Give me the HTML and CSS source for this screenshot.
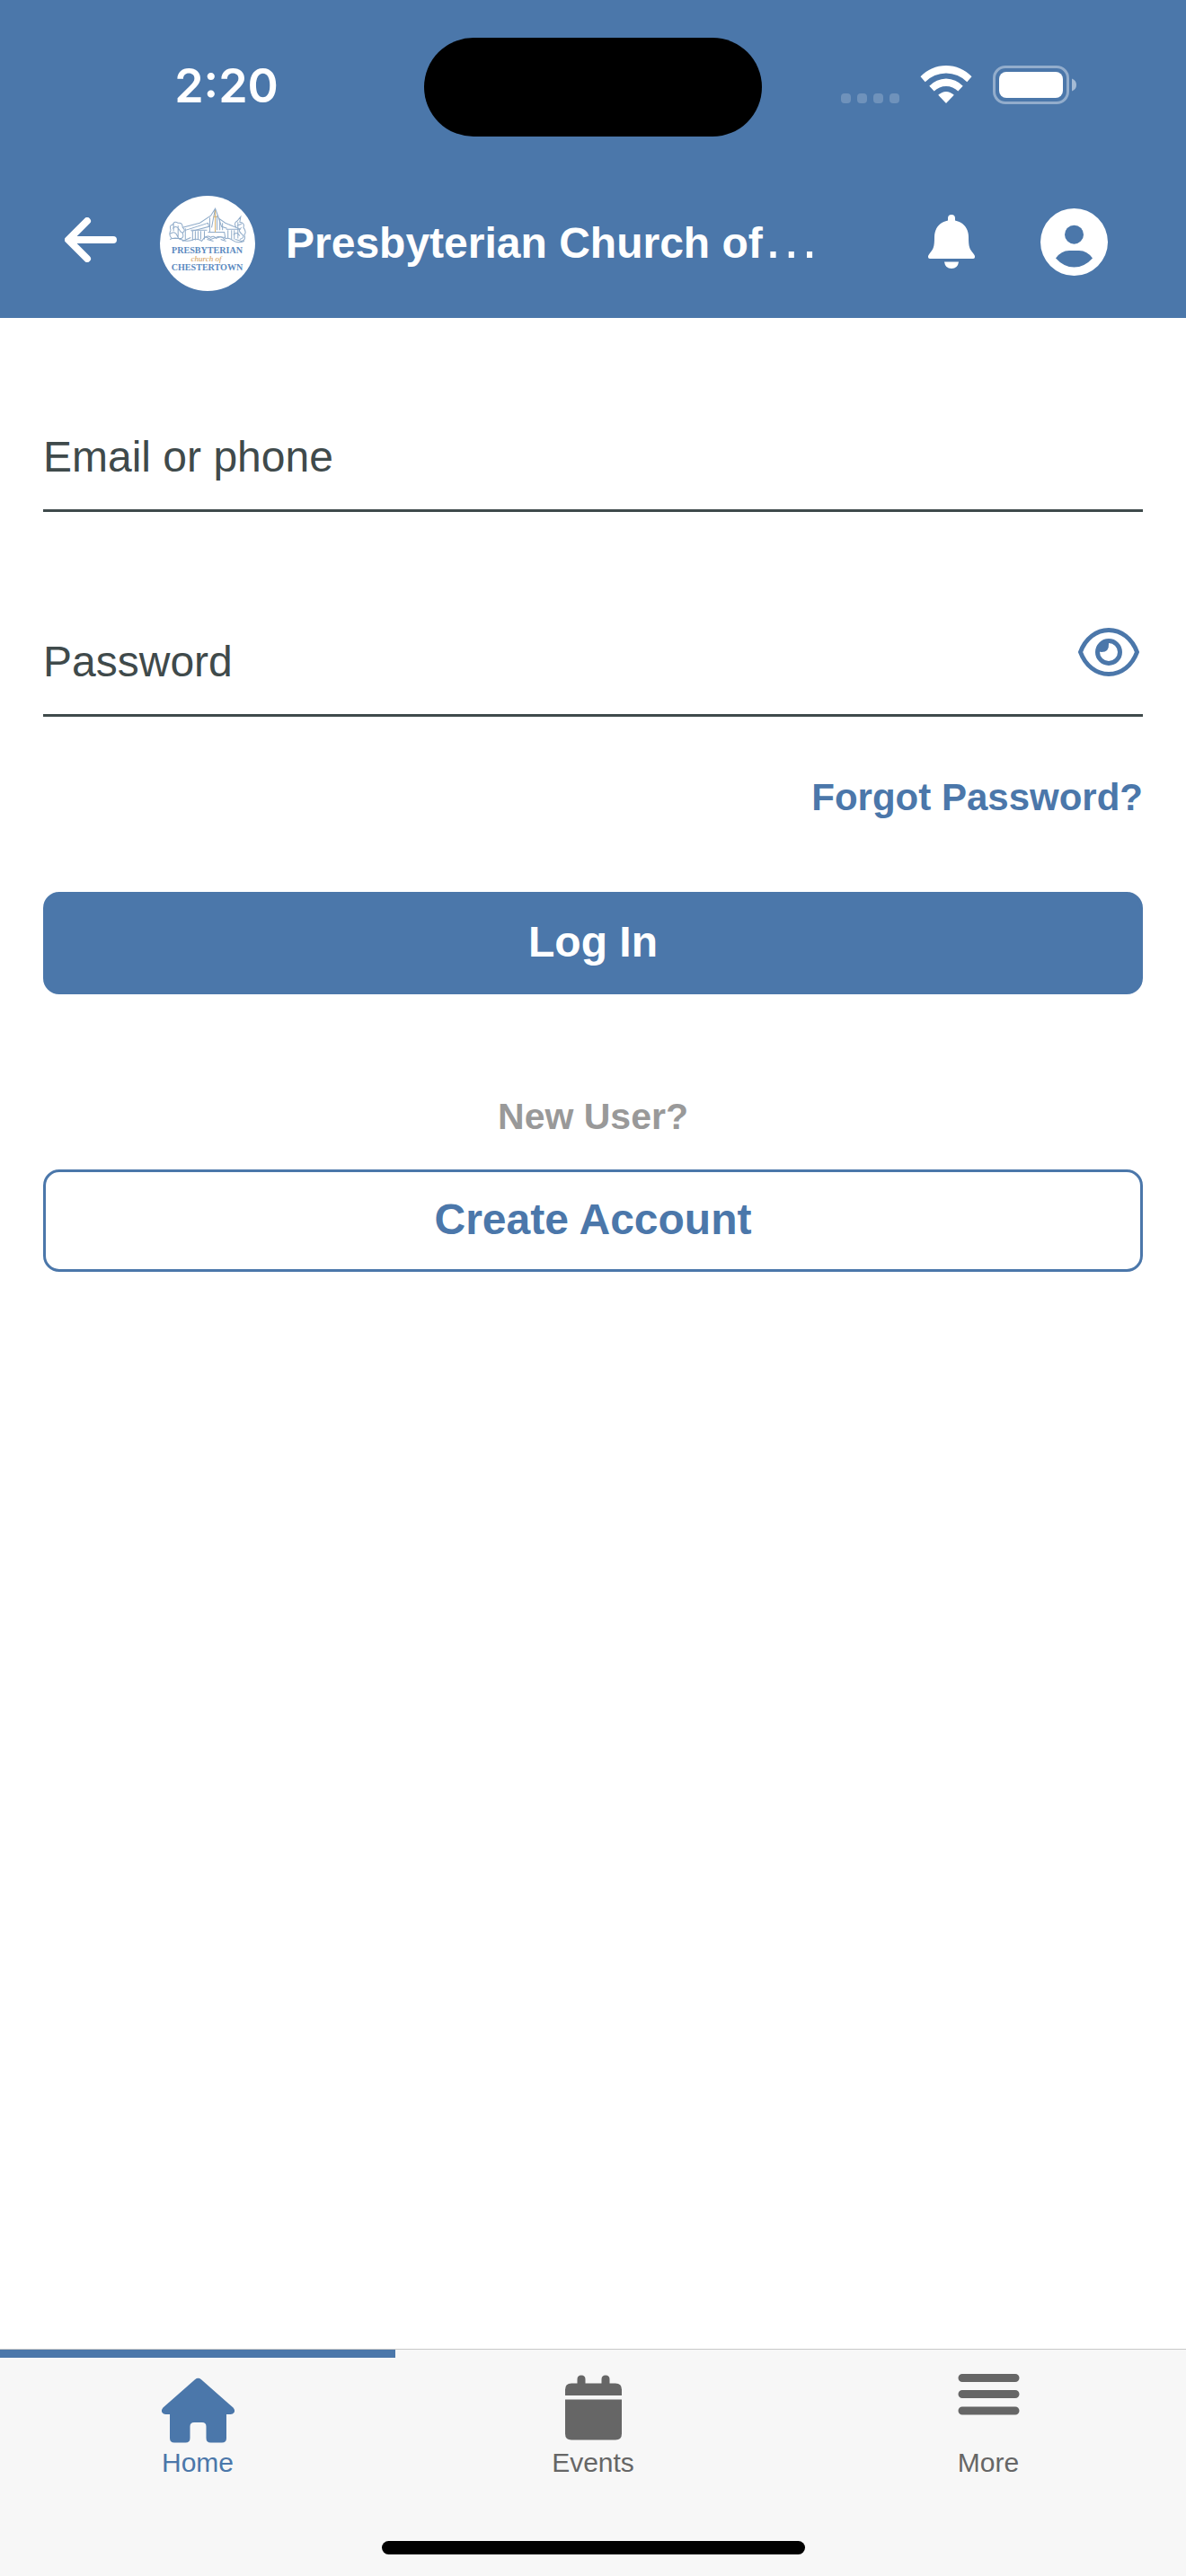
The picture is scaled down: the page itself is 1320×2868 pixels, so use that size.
FILE: index.html
```
<!DOCTYPE html>
<html lang="en">
<head>
    <meta charset="UTF-8">
    <meta name="viewport" content="width=device-width, initial-scale=1">
    <title>Log In</title>
    <link rel="stylesheet" href="styles.css">
</head>
<body>
    <header class="header">
        <div class="status-bar">
            <div class="status-time">2:20</div>
            <div class="island"></div>
            <div class="status-icons">
                <svg class="signal" viewBox="0 0 65 42">
                    <rect x="0" y="31" width="11" height="11" rx="4"/>
                    <rect x="18" y="31" width="11" height="11" rx="4"/>
                    <rect x="36" y="31" width="11" height="11" rx="4"/>
                    <rect x="54" y="31" width="11" height="11" rx="4"/>
                </svg>
                <svg class="wifi" viewBox="0 0 58 42">
                    <path d="M29 0C40 0 50 4.500 57.500 12.200L52.300 18.300A32.500 32.500 0 0 0 5.700 18.300L.5 12.200C8 4.500 18 0 29 0z"/>
                    <path d="M29 14.600A28 28 0 0 1 47.700 22.800L42.300 28.600A18.500 18.500 0 0 0 15.700 28.600L10.300 22.800A28 28 0 0 1 29 14.600z"/>
                    <path d="M29 29Q33.500 29 37.800 32.800L29 42L20.200 32.800Q24.500 29 29 29z"/>
                </svg>
                <svg class="battery" viewBox="0 0 94 44">
                    <rect x="1.500" y="1.500" width="82" height="40" rx="12.500" fill="none" stroke="#fff" stroke-opacity=".4" stroke-width="3"/>
                    <rect x="7" y="7" width="71" height="29" rx="8"/>
                    <path d="M88 14.500Q93 16.500 93 21.500T88 28.500z" fill-opacity=".5"/>
                </svg>
            </div>
        </div>
        <div class="nav-bar">
            <button class="icon-btn back-btn" type="button" aria-label="Back">
                <svg viewBox="0 0 58 50" fill="none" stroke="#fff" stroke-width="8" stroke-linecap="round" stroke-linejoin="round">
                    <path d="M25 4L4 25L25 46M5 25H54"/>
                </svg>
            </button>
            <svg class="logo" viewBox="0 0 105 105" role="img" aria-label="Presbyterian Church of Chestertown">
                <circle cx="52.500" cy="52.500" r="52.500" fill="#fff"/>
                <g fill="none" stroke="#8fabc9" stroke-width="1">
                    <path d="M25 35L44 30L56 22L61 14L65 25L72 30L89 37M28 38L53 30L54 34L35 39M61 14L57 35M61 14L68 34L74 36"/>
                    <path d="M55 24V40M63 22V38M66 26V38M69 30V38M53 40H71L72 46L64 45L56 48L50 45"/>
                    <path d="M28 36V48M34 38H52M36 39V49M39 39V49M42 39V48M45 39V48M49 39V48M75 38V47M79 38V48M82 38V48M73 37H88"/>
                    <path d="M12 38Q10 32 14 32Q16 27 20 30Q25 29 25 35Q29 38 25 41Q27 47 22 47H13Q9 43 12 38M14 36Q18 32 21 37T25 40M11 42Q17 38 19 44T25 46M15 31V39M20 33V47"/>
                    <path d="M84 35Q81 30 85 28L89 23L88 29Q94 30 92 35Q96 40 93 43Q95 49 90 50L83 48M85 33L90 31M86 29V47M90 35Q85 38 90 42T88 48M81 43Q85 39 88 44"/>
                    <path d="M11 48Q17 45 23 48T35 49Q41 46 46 50Q51 42 56 46Q59 43 62 47Q68 43 71 48Q75 45 80 49T93 50M25 50L34 46M52 48L59 50M67 48L73 50"/>
                </g>
                <path d="M61 16V40M59 23H63" stroke="#d4b06c" stroke-width="1" fill="none"/>
                <text class="logo-name" x="52" y="63" text-anchor="middle">PRESBYTERIAN</text>
                <text class="logo-name" x="52" y="82" text-anchor="middle">CHESTERTOWN</text>
                <text class="logo-script" x="51" y="72" text-anchor="middle">church of</text>
            </svg>
            <h1 class="title">Presbyterian Church of<span class="ellipsis">…</span></h1>
            <button class="icon-btn bell-btn" type="button" aria-label="Notifications">
                <svg viewBox="0 0 54 60" fill="#fff">
                    <path d="M27 0Q31 0 31 4V6.500C41 8.500 46 16 46 25C46 36 47 38 51.500 43.500Q54 46.500 52.500 48.500Q51.500 49 49 49H5Q2.500 49 1.500 48.500Q0 46.500 2.500 43.500C7 38 8 36 8 25C8 16 13 8.500 23 6.500V4Q23 0 27 0z"/>
                    <path d="M19 52.500H35Q34 60 27 60T19 52.500z"/>
                </svg>
            </button>
            <button class="icon-btn account-btn" type="button" aria-label="Account">
                <svg viewBox="0 0 75 75">
                    <path fill="#fff" fill-rule="evenodd" d="M37.500 0a37.500 37.500 0 1 0 0 75a37.500 37.500 0 1 0 0-75zM37.500 18.700a10.500 10.500 0 1 1 0 21a10.500 10.500 0 1 1 0-21zM17 55.500Q23 47 32 47H43Q52 47 58 55.500Q49 65.500 37.500 65.500T17 55.500z"/>
                </svg>
            </button>
        </div>
    </header>

    <main class="content">
        <form class="login-form">
            <div class="field">
                <input type="text" id="login" placeholder="Email or phone" aria-label="Email or phone">
            </div>
            <div class="field">
                <input type="password" id="password" placeholder="Password" aria-label="Password">
                <button class="icon-btn eye-btn" type="button" aria-label="Show password">
                    <svg viewBox="0 0 68 54">
                        <path fill="none" stroke="#4b77aa" stroke-width="5" stroke-linejoin="round" d="M34 2.500C20 2.500 8 12 2.500 27C8 42 20 51.500 34 51.500S60 42 65.500 27C60 12 48 2.500 34 2.500z"/>
                        <circle cx="34" cy="27" r="12.500" fill="none" stroke="#4b77aa" stroke-width="5"/>
                        <path fill="#4b77aa" d="M34 14V18Q34.500 27 26 27L21 26Q22 15 34 14z"/>
                    </svg>
                </button>
            </div>
            <a class="forgot" href="#">Forgot Password?</a>
            <button class="btn btn-primary" type="submit">Log In</button>
            <p class="new-user">New User?</p>
            <button class="btn btn-outline" type="button">Create Account</button>
        </form>
    </main>

    <footer class="footer">
        <nav class="tabs">
            <a class="tab active" href="#">
                <svg viewBox="0 0 81 81">
                    <path d="M37 6.200Q40.500 3.300 44 6.200L79.500 37.500Q82 40.300 80.500 43Q79.300 45 76.500 45H72V71.500Q72 76.500 67 76.500H54.500Q49.500 76.500 49.500 71.500V58.500Q49.500 54 45 54H36Q31.500 54 31.500 58.500V71.500Q31.500 76.500 26.500 76.500H14Q9 76.500 9 71.500V45H4.500Q1.700 45 .5 43Q-1 40.300 1.500 37.500z"/>
                </svg>
                <span>Home</span>
            </a>
            <a class="tab" href="#">
                <svg viewBox="0 0 81 81">
                    <path d="M9 24V17.500Q9 10.500 16 10.500H22.500V6Q22.500 1.500 27 1.500T31.500 6V10.500H49.500V6Q49.500 1.500 54 1.500T58.500 6V10.500H65Q72 10.500 72 17.500V24zM9 28.500H72V66.500Q72 73.500 65 73.500H16Q9 73.500 9 66.500z"/>
                </svg>
                <span>Events</span>
            </a>
            <a class="tab" href="#">
                <svg viewBox="0 0 81 81">
                    <path d="M11 4.500H70M11 22.500H70M11 41H70" fill="none" stroke="#666" stroke-width="9" stroke-linecap="round"/>
                </svg>
                <span>More</span>
            </a>
        </nav>
        <div class="home-indicator"></div>
    </footer>
</body>
</html>
```
FILE: styles.css
```
* {
    box-sizing: border-box;
}
body {
    margin: 0;
    min-height: 100vh;
    display: flex;
    flex-direction: column;
    background: white;
    font-family: "Liberation Sans", Arial, sans-serif;
    font-size: 48px;
    color: #3f4a4b;
}
svg {
    display: block;
}

/* Header */
.header {
    background: #4b77aa;
    color: white;
    padding: 42px 87px 30px 72px;
}
.status-bar {
    display: grid;
    grid-template-columns: 1fr 376px 1fr;
    margin: 0 -87px 0 -72px;
}
.status-time {
    font-family: Inter, sans-serif;
    font-size: 52px;
    font-weight: 600;
    line-height: 108px;
    padding-left: 32px;
    text-align: center;
}
.island {
    height: 110px;
    border-radius: 55px;
    background: black;
}
.status-icons {
    display: flex;
    justify-content: flex-end;
    gap: 23px;
    padding: 31px 121px 0 0;
    fill: white;
}
.signal {
    width: 65px;
    height: 42px;
    fill-opacity: 0.2;
}
.wifi {
    width: 58px;
    height: 42px;
}
.battery {
    width: 94px;
    height: 44px;
}
.nav-bar {
    display: flex;
    align-items: center;
    margin-top: 66px;
}
.icon-btn {
    border: none;
    background: none;
    padding: 0;
    cursor: pointer;
}
.back-btn {
    padding-bottom: 8px;
}
.back-btn svg {
    width: 58px;
    height: 50px;
}
.logo {
    width: 106px;
    height: 106px;
    margin: 0 34px 0 48px;
}
.logo-name {
    font-family: "Liberation Serif", serif;
    font-size: 10px;
    font-weight: bold;
    fill: #5c8abf;
}
.logo-script {
    font-family: "Liberation Serif", serif;
    font-size: 9px;
    font-style: italic;
    fill: #d29a51;
}
.title {
    flex: 1;
    margin: 0;
    font-size: 48px;
    line-height: 54px;
    font-weight: bold;
    white-space: nowrap;
}
.ellipsis {
    font-size: 64px;
    line-height: 1px;
    font-weight: normal;
}
.bell-btn {
    margin-right: 72px;
    padding-bottom: 4px;
}
.bell-btn svg {
    width: 54px;
    height: 60px;
}
.account-btn {
    padding-bottom: 4px;
}
.account-btn svg {
    width: 75px;
    height: 75px;
}

/* Login form */
.content {
    flex: 1;
    padding: 102px 48px 0;
}
.login-form {
    display: flex;
    flex-direction: column;
}
.field {
    display: flex;
    align-items: center;
    height: 114px;
    margin-bottom: 114px;
    border-bottom: 3px solid #3f4a4b;
}
.field:nth-child(2) {
    margin-bottom: 66px;
}
.field input {
    flex: 1;
    min-width: 0;
    padding: 0 0 6px;
    border: none;
    outline: none;
    background: none;
    font: inherit;
    color: inherit;
}
.field input::placeholder {
    color: #3f4a4b;
    opacity: 1;
}
.eye-btn {
    padding: 0 4px 28px 0;
}
.eye-btn svg {
    width: 68px;
    height: 54px;
}
.forgot {
    align-self: flex-end;
    margin-bottom: 81px;
    font-size: 42px;
    line-height: 48px;
    font-weight: bold;
    color: #4b77aa;
    text-decoration: none;
}
.btn {
    height: 114px;
    padding: 0 0 3px;
    border: 3px solid #4b77aa;
    border-radius: 18px;
    font-family: inherit;
    font-size: 48px;
    font-weight: bold;
    cursor: pointer;
}
.btn-primary {
    background: #4b77aa;
    color: white;
}
.btn-outline {
    background: white;
    color: #4b77aa;
}
.new-user {
    margin: 112px 0 35px;
    font-size: 41px;
    line-height: 48px;
    font-weight: bold;
    text-align: center;
    color: #999;
}

/* Bottom tabs */
.footer {
    background: #f7f7f7;
    border-top: 1px solid #c8c8c8;
    padding-bottom: 24px;
}
.tabs {
    display: flex;
}
.tab {
    flex: 1;
    display: flex;
    flex-direction: column;
    align-items: center;
    border-top: 9px solid transparent;
    padding: 18px 0 69px;
    font-size: 30px;
    line-height: 36px;
    color: #666;
    fill: #666;
    text-decoration: none;
}
.tab.active {
    border-top-color: #4b77aa;
    color: #4b77aa;
    fill: #4b77aa;
}
.tab svg {
    width: 81px;
    height: 81px;
}
.home-indicator {
    width: 471px;
    height: 15px;
    margin: 0 auto;
    border-radius: 8px;
    background: black;
}
```
